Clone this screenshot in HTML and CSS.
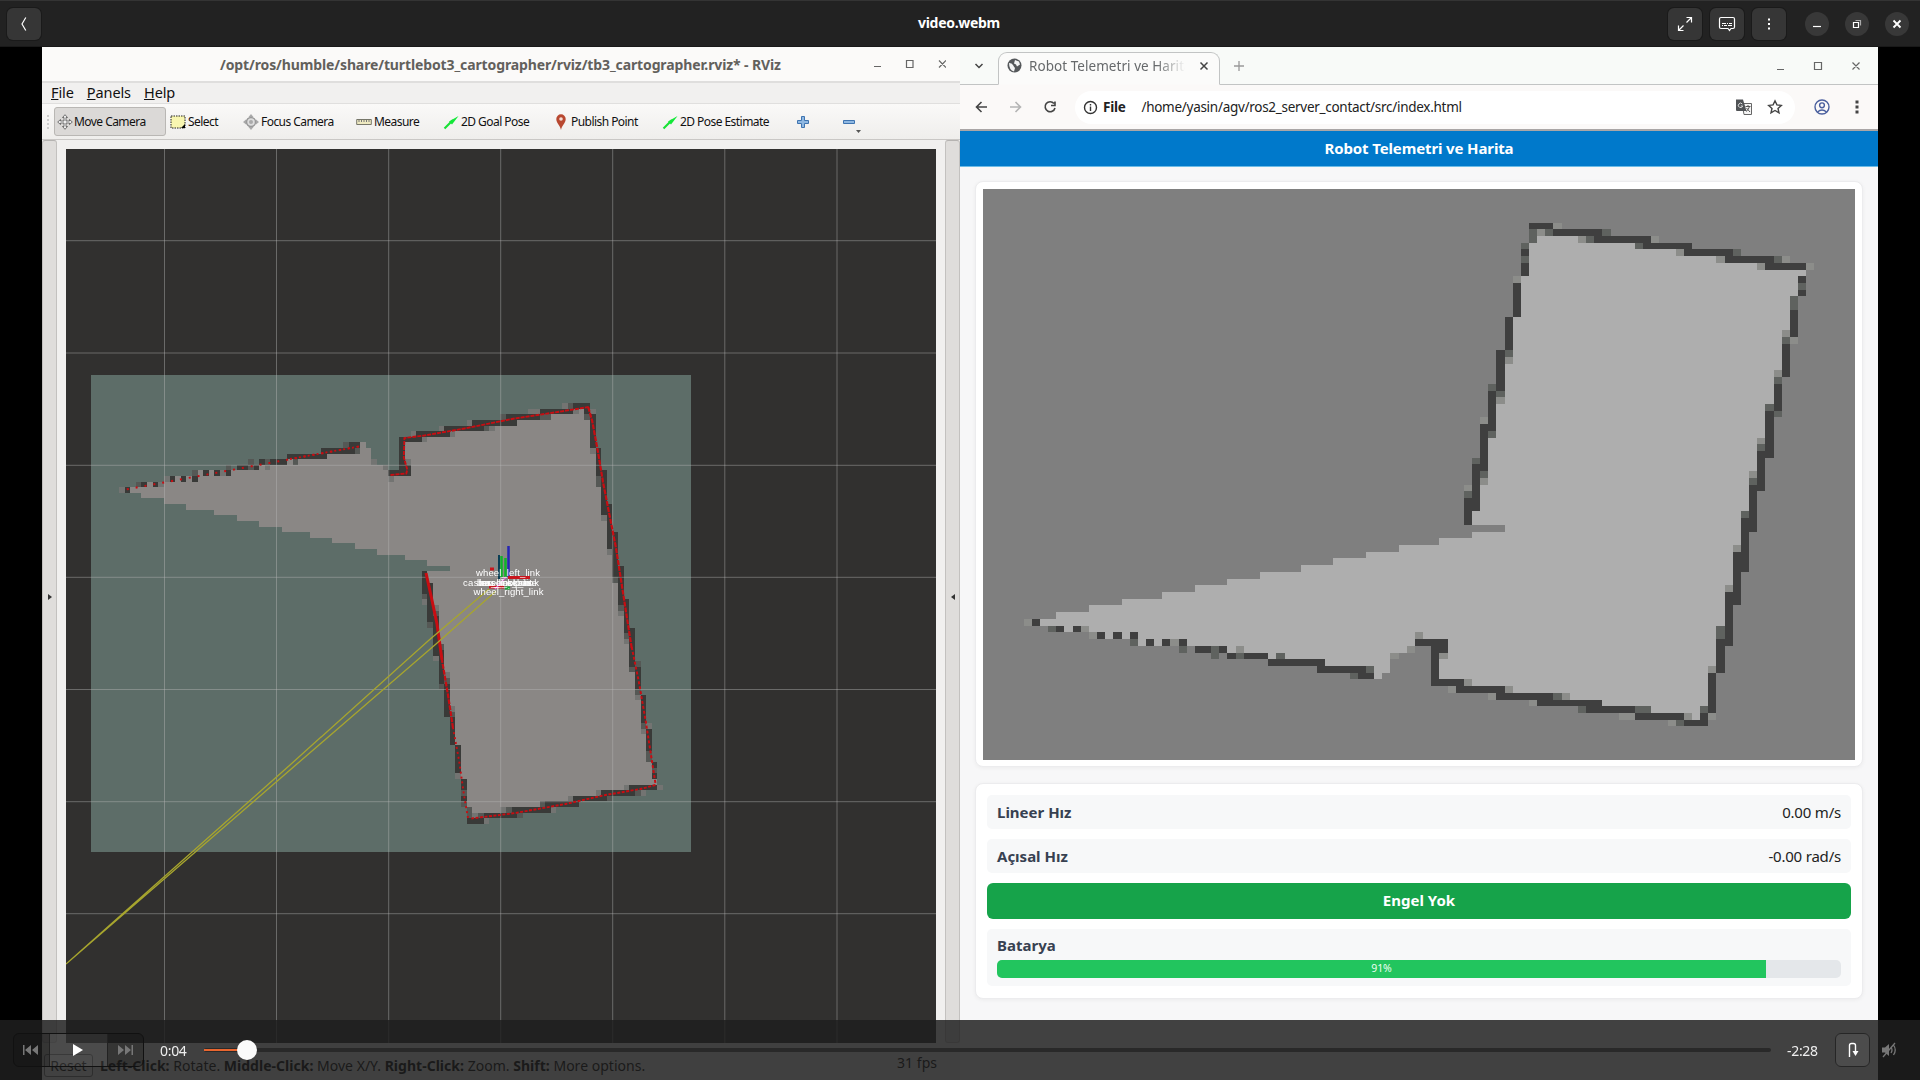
FILE: index.html
```html
<!DOCTYPE html>
<html lang="tr">
<head>
<meta charset="utf-8">
<title>video.webm</title>
<link rel="stylesheet" href="styles.css">
</head>
<body>
<header class="player-bar">
  <button class="hbtn back"><svg width="16" height="16" viewBox="0 0 16 16"><path d="M9.800 1.500 6 8l3.800 6.500"/></svg></button>
  <h1 class="player-title">video.webm</h1>
  <div class="player-actions">
    <button class="hbtn"><svg width="16" height="16" viewBox="0 0 16 16"><path d="M9.500 1.500h5v5M14 2 9.500 6.500M6.500 14.500h-5v-5M2 14l4.500-4.500"/></svg></button>
    <button class="hbtn"><svg width="18" height="16" viewBox="0 0 18 16"><path d="M3 1.500h12q1.500 0 1.500 1.500v8q0 1.500-1.500 1.500h-2l-1.500 2-1.500-2H3Q1.500 12.500 1.500 11V3Q1.500 1.500 3 1.500zM4 7.500h4M9 7.500h1M11 7.500h3M4 9.500h1M6 9.500h3M10 9.500h4"/></svg></button>
    <button class="hbtn"><svg width="16" height="16" viewBox="0 0 16 16"><path class="solid" d="M7 2.500h2v2H7zM7 7h2v2H7zM7 11.500h2v2H7z"/></svg></button>
  </div>
  <div class="win-actions">
    <button class="round"><svg width="16" height="16" viewBox="0 0 16 16"><path d="M4 10.500h8"/></svg></button>
    <button class="round"><svg width="16" height="16" viewBox="0 0 16 16"><path d="M4.500 6.500h5v5h-5z"/><path class="faint" d="M6.500 4.500h5v5"/></svg></button>
    <button class="round"><svg width="16" height="16" viewBox="0 0 16 16"><path class="bold" d="m4.500 4.500 7 7m0-7-7 7"/></svg></button>
  </div>
</header>

<main class="stage">
  <section class="rviz">
    <div class="rviz-title">
      <span class="rviz-name">/opt/ros/humble/share/turtlebot3_cartographer/rviz/tb3_cartographer.rviz* - RViz</span>
      <svg class="rviz-win" width="76" height="16" viewBox="0 0 76 16"><path d="M4 10.500h7M36.500 4.500h6.500v7h-6.500zM69 4.500l7 7m0-7-7 7"/></svg>
    </div>
    <nav class="menu"><span><u>F</u>ile</span><span><u>P</u>anels</span><span><u>H</u>elp</span></nav>
    <div class="tools">
      <i class="grip"></i>
      <div class="tool active"><svg width="16" height="16" viewBox="0 0 16 16"><path d="M8 .7 10.500 3.500H9V7h3.500V5.500L15.300 8l-2.800 2.500V9H9v3.500h1.500L8 15.300 5.500 12.500H7V9H3.500v1.500L.7 8l2.800-2.500V7H7V3.500H5.500z" fill="#eee" stroke="#555" stroke-width=".8"/></svg><span>Move Camera</span></div>
      <div class="tool"><svg width="16" height="16" viewBox="0 0 16 16"><path d="M1 2h14v12H1z" fill="#f8f6b0" stroke="#222" stroke-dasharray="1.500 1"/><path d="m15 10v4h-4z"/></svg><span>Select</span></div>
      <div class="tool"><svg width="16" height="16" viewBox="0 0 16 16"><path d="m8 0 2.500 3h-5zM8 16l2.500-3h-5zM0 8l3-2.500v5zM16 8l-3-2.500v5z" fill="#aaa"/><circle cx="8" cy="8" r="4.500" fill="#ddd" stroke="#999" stroke-width="1.500"/><circle cx="8" cy="8" r="2" fill="#aaa"/></svg><span>Focus Camera</span></div>
      <div class="tool"><svg width="16" height="16" viewBox="0 0 16 16"><path d="M.7 5.500h14.600v5H.7z" fill="#eee9c0" stroke="#77776a"/><path d="M3 6v2M5.500 6v2M8 6v2M10.500 6v2M13 6v2" stroke="#777"/></svg><span>Measure</span></div>
      <div class="tool"><svg width="16" height="16" viewBox="0 0 16 16"><path d="M1.500 14.500 10 6" stroke="#19e135" stroke-width="2.200"/><path d="m6 7.500 3 3L15.500 2z" fill="#12e838"/></svg><span>2D Goal Pose</span></div>
      <div class="tool"><svg width="16" height="16" viewBox="0 0 16 16"><path d="M8 16C7 11 3.300 9 3.300 5a4.700 4.700 0 0 1 9.400 0C12.700 9 9 11 8 16z" fill="#b84830"/><circle cx="8" cy="5" r="1.800" fill="#f3dcd5"/></svg><span>Publish Point</span></div>
      <div class="tool"><svg width="16" height="16" viewBox="0 0 16 16"><path d="M1.500 14.500 10 6" stroke="#19e135" stroke-width="2.200"/><path d="m6 7.500 3 3L15.500 2z" fill="#12e838"/></svg><span>2D Pose Estimate</span></div>
      <div class="tool"><svg width="14" height="14" viewBox="0 0 14 14"><path d="M5.500 1.500h3v4h4v3h-4v4h-3v-4h-4v-3h4z" fill="#8fb8e2" stroke="#3f74b0"/></svg></div>
      <div class="tool"><svg width="22" height="22" viewBox="0 0 22 22"><path d="M1.500 9.500h11v3h-11z" fill="#8fb8e2" stroke="#3f74b0"/><path d="M14 19h5l-2.500 3z" fill="#555"/></svg></div>
    </div>
    <div class="rviz-body">
      <div class="dock"><i class="arrow-r"></i></div>
      <div class="view">
        <canvas class="occupancy" id="costmap" width="107" height="85"></canvas>
        <svg class="overlay" width="870" height="894" viewBox="66 149 870 894">
          <path d="M164.500 149v894M276.500 149v894M388.700 149v894M500.700 149v894M612.700 149v894M724.800 149v894M837 149v894M66 240.700h870M66 353h870M66 465.300h870M66 577.300h870M66 689.500h870M66 801.700h870M66 913.700h870" stroke="#b8b8b8" stroke-opacity=".43"/>
          <g fill="none" stroke="#c80d12">
            <path d="M126.800 489.300 359 446.500" stroke-width="2" stroke-dasharray="2 7"/>
            <path d="M290 459l69-12.500" stroke-width="1.800" stroke-dasharray="2 2.500"/>
            <path d="m390.500 475 15.800-1.500 1-4-3.500-12 .6-19.500 20-2.500 40-7 50-10 40-6 34.300-5.500" stroke-width="1.900" stroke-dasharray="4 1"/>
            <path d="m588.200 407 4 14 5.800 31 5 30 13 66 15.700 100" stroke-width="2.200" stroke-dasharray="5 1"/>
            <path d="m631.700 647 7 34 7 40 10 64" stroke-width="2" stroke-dasharray="3 2"/>
            <path d="m655.400 785-15 4-35 6-40 9-50 9-44 5.500" stroke-width="1.900" stroke-dasharray="3 1.500"/>
            <path d="m468 818-4-23-5-35-6-32" stroke-width="1.900" stroke-dasharray="2 3"/>
            <path d="m453 728-5-33-6-35" stroke-width="2.200" stroke-dasharray="5 1"/>
            <path d="m442 660-5-36-5.500-26-5.500-25" stroke-width="3"/>
          </g>
          <path d="M489 589 428 641 290 765 66 964M496 591 436 644 290 770 66 964" fill="none" stroke="#a7a52e" stroke-width="1.300"/>
          <path d="M499 555v24" stroke="#0b3f55" stroke-width="2"/>
          <path d="M501.500 556v21M505.500 558v19" stroke="#10b42a" stroke-width="2.500"/>
          <path d="M508.500 546v31" stroke="#2525b4" stroke-width="2.500"/>
          <path d="M508 577.500h22M489 587h15M490 569h4" stroke="#c9161d" stroke-width="3"/>
          <path d="m495 589 11-12" stroke="#e46bd6" stroke-width="1.500"/>
          <path d="M505 588h5" stroke="#19a838" stroke-width="3"/>
          <g class="frames">
            <text x="476" y="576" textLength="64">wheel_left_link</text>
            <text x="463" y="585.500" textLength="76">caster_back_link</text>
            <text x="477" y="585.500" textLength="55">base_footprint</text>
            <text x="479" y="585.500" textLength="50">base_scan</text>
            <text x="479" y="585.500" textLength="58">imu_link_base</text>
            <text x="473.500" y="594.500" textLength="70">wheel_right_link</text>
          </g>
        </svg>
      </div>
      <div class="dock"><i class="arrow-l"></i></div>
    </div>
    <footer class="status"><button class="reset">Reset</button><p><b>Left-Click:</b> Rotate. <b>Middle-Click:</b> Move X/Y. <b>Right-Click:</b> Zoom. <b>Shift:</b> More options.</p><span class="fps">31 fps</span></footer>
  </section>

  <section class="browser">
    <div class="tabstrip">
      <svg class="chev" width="10" height="10" viewBox="0 0 10 10"><path d="m1.500 3 3.500 3.500L8.500 3"/></svg>
      <div class="tab">
        <svg width="15" height="15" viewBox="0 0 15 15"><circle cx="7.500" cy="7.500" r="7" fill="#55585b"/><path d="M2 5q3 0 4 2t2 3l-1 3.500Q2 12 2 5M8 2l4 1.500 1 3-3 2-1-2-2-1z" fill="#f3f4f4"/></svg>
        <span class="tab-name">Robot Telemetri ve Harita</span>
        <svg width="10" height="10" viewBox="0 0 10 10"><path d="m1.500 1.500 7 7m0-7-7 7" stroke="#444" stroke-width="1.500"/></svg>
      </div>
      <svg class="plus" width="12" height="12" viewBox="0 0 12 12"><path d="M6 1v10M1 6h10"/></svg>
      <svg class="bwin" width="84" height="16" viewBox="0 0 84 16"><path d="M1 11.500h7M38.500 4.500h7v7h-7zM76.500 4.500l7 7m0-7-7 7"/></svg>
    </div>
    <div class="urlbar">
      <svg width="82" height="16" viewBox="0 0 82 16" fill="none" stroke-width="1.600"><path d="M12 8H1.500M6.500 3l-5 5 5 5" stroke="#444"/><path d="M35 8h10.500M40.500 3l5 5-5 5" stroke="#b5b5b5"/><path d="M79 4.500A5 5 0 1 0 80 9M80 2.500v4h-4" stroke="#444"/></svg>
      <div class="omnibox">
        <svg width="15" height="15" viewBox="0 0 15 15" fill="none" stroke="#333" stroke-width="1.400"><circle cx="7.500" cy="7.500" r="6"/><path d="M7.500 6.500v4.500M7.500 4v1.500"/></svg>
        <b>File</b><span class="url">/home/yasin/agv/ros2_server_contact/src/index.html</span>
        <svg class="translate" width="16" height="16" viewBox="0 0 16 16"><path d="M6 4.500h9.500v11H8z" fill="#f5f5f5" stroke="#666"/><path d="M0 .5h7L10.500 12H1Q0 12 0 11z" fill="#505356"/><path d="M6.300 5A2.200 2.200 0 1 0 6.700 7H4.800" fill="none" stroke="#ddd"/><path d="M9.500 7.500h5M12 6v1.500M13.500 7.500q-1 3.500-3.500 5M10.500 9l3.500 4" fill="none" stroke="#555"/></svg>
        <svg width="16" height="16" viewBox="0 0 16 16"><path d="m8 1.800 1.900 4.100 4.400.5-3.300 3 1 4.400L8 11.500l-4 2.300 1-4.400-3.300-3 4.400-.5z" fill="none" stroke="#444" stroke-width="1.400"/></svg>
      </div>
      <svg width="16" height="16" viewBox="0 0 16 16" fill="none" stroke="#4a5f9e" stroke-width="1.400"><circle cx="8" cy="8" r="7"/><circle cx="8" cy="6.300" r="2.400"/><path d="M3.500 13q4.500-4 9 0"/></svg>
      <svg class="kebab" width="4" height="16" viewBox="0 0 4 16"><path d="M.5 1.500h3v3h-3zM.5 6.500h3v3h-3zM.5 11.500h3v3h-3z" fill="#444"/></svg>
    </div>
    <h2 class="page-head">Robot Telemetri ve Harita</h2>
    <div class="page">
      <div class="card map-card"><canvas class="map" id="map" width="107" height="85"></canvas></div>
      <div class="card stats">
        <div class="row"><b>Lineer Hız</b><span>0.00 m/s</span></div>
        <div class="row"><b>Açısal Hız</b><span>-0.00 rad/s</span></div>
        <div class="ok">Engel Yok</div>
        <div class="battery"><b>Batarya</b><div class="bar"><div class="fill" style="width:91.1%">91%</div></div></div>
      </div>
    </div>
  </section>
</main>

<div class="controls">
  <div class="transport">
    <button><svg width="16" height="12" viewBox="0 0 16 12"><path d="M0 1h1.500v10H0zM8 1v10L2 6zM15 1v10L9 6z"/></svg></button>
    <button class="play"><svg width="12" height="12" viewBox="0 0 12 12"><path d="M1 0v12l10-6z"/></svg></button>
    <button><svg width="16" height="12" viewBox="0 0 16 12"><path d="M1 1v10l6-5zM8 1v10l6-5zM14.500 1H16v10h-1.500z"/></svg></button>
  </div>
  <span class="time now">0:04</span>
  <div class="track"><div class="played" style="width:2.75%"></div><i class="thumb"></i></div>
  <span class="time left">-2:28</span>
  <button class="loop"><svg width="16" height="16" viewBox="0 0 16 16"><path d="M4.500 15V3.500q0-2 2-2h2q2 0 2 2V10" fill="none" stroke="#fff" stroke-width="1.400"/><path d="M7.500 9h6l-3 5z" fill="#fff"/></svg></button>
  <svg class="mute" width="16" height="16" viewBox="0 0 16 16"><path d="M1 5.500h3L8 2v12l-4-3.500H1z" fill="#777"/><path d="M10 5q2 3 0 6M12.500 3q3.500 5 0 10M2 15 14 1" fill="none" stroke="#777" stroke-width="1.300"/></svg>
</div>
<script src="map.js"></script>
</body>
</html>
```
FILE: styles.css
```css
* { box-sizing: border-box; }
body { margin: 0; width: 1920px; height: 1080px; overflow: hidden; display: flex; flex-direction: column; position: relative; background: #000; font-family: "Noto Sans", "Open Sans", sans-serif; font-size: 14px; }
button { font: inherit; padding: 0; margin: 0; border: 0; display: flex; align-items: center; justify-content: center; }
svg { flex: none; display: block; }

.player-bar { height: 47px; background: #222; border-top: 1px solid #343434; border-bottom: 1px solid #191919; display: grid; grid-template-columns: 1fr auto 1fr; align-items: center; padding: 0 9px 0 7px; flex: none; }
.player-title { margin: 0 0 2px 0; font-size: 14px; font-weight: 700; color: #fff; grid-column: 2; letter-spacing: -.3px; }
.back { justify-self: start; }
.player-bar svg path { fill: none; stroke: #fff; stroke-width: 1.200; }
.player-bar svg .solid { fill: #fff; stroke: none; }
.player-bar svg .faint { stroke: #aaa; }
.player-bar svg .bold { stroke-width: 1.800; }
.hbtn { width: 34px; height: 32px; background: #363636; border-radius: 6px; box-shadow: 0 0 0 1px #1a1a1a; }
.player-actions { display: flex; gap: 8px; justify-self: end; margin-right: 125px; grid-column: 3; grid-row: 1; }
.win-actions { display: flex; gap: 16px; grid-column: 3; grid-row: 1; justify-self: end; margin-right: 2px; }
.round { width: 24px; height: 24px; border-radius: 50%; background: #383838; }

.stage { flex: 1; display: flex; padding: 0 42px; min-height: 0; }
.rviz { width: 918px; display: flex; flex-direction: column; background: #f1f0ef; color: #222; }
.rviz-title { height: 36px; background: #fbfaf9; border-bottom: 2px solid #dfdedd; display: flex; align-items: center; padding: 0 14px 0 178px; justify-content: space-between; }
.rviz-name { color: #62605c; font-weight: 700; font-size: 14px; letter-spacing: -.12px; white-space: nowrap; }
.rviz-win path, .bwin path { fill: none; stroke: #666; stroke-width: 1.200; }
.menu { height: 21px; display: flex; gap: 13px; padding: 0 0 3px 9px; align-items: center; font-size: 14.500px; line-height: 18px; letter-spacing: -.1px; color: #111; border-bottom: 1px solid #e0dfde; }
.tools { height: 36px; display: grid; grid-template-columns: 12px 113px 73px 113px 87px 110px 109px 134px 46px 30px; align-items: center; background: linear-gradient(#faf9f8, #efeeec); border-bottom: 1px solid #c9c7c5; font-size: 12px; letter-spacing: -.55px; color: #111; }
.grip { width: 4px; height: 16px; margin-left: 4px; background: radial-gradient(#ccc 1px, transparent 1px) 0 0/4px 4px; }
.tool { display: flex; align-items: center; gap: 2px; padding-left: 3px; height: 29px; white-space: nowrap; }
.tool.active { width: 112px; background: #dbd9d7; border: 1px solid #b9b7b4; border-radius: 3px; padding-left: 2px; gap: 1px; }
.rviz-body { flex: none; height: 903px; display: flex; justify-content: space-between; }
.dock { width: 15px; border: 1px solid #c3c1bf; border-top-color: #b5b3b1; background: #dfdddb; border-radius: 3px; display: flex; align-items: center; justify-content: center; }
.arrow-r, .arrow-l { border: 3px solid transparent; margin-top: 10px; }
.arrow-r { border-left: 4px solid #333; border-right: 0; }
.arrow-l { border-right: 4px solid #333; border-left: 0; }
.view { position: relative; width: 870px; height: 894px; margin-top: 9px; background: #31302f; overflow: hidden; }
.occupancy { position: absolute; left: 25.300px; top: 226.300px; width: 599.700px; height: 476.500px; image-rendering: pixelated; }
.overlay { position: absolute; left: 0; top: 0; }
.frames { font: 9.500px "Liberation Sans", sans-serif; fill: #fff; }
.status { flex: 1; display: flex; align-items: center; padding: 8px 23px 0 2px; font-size: 14px; letter-spacing: .02px; color: #000; }
.status p { margin: 0 auto 0 7px; }
.reset { width: 49px; height: 23px; border: 1px solid #777; border-radius: 3px; background: #f5f5f5; color: #000; }
.fps { margin-top: -6px; }

.browser { width: 918px; display: flex; flex-direction: column; background: #f7f7f8; }
.tabstrip { height: 38px; display: flex; align-items: center; background: #f8faf8; border-bottom: 1px solid #c2c4c4; padding: 0 18px 0 14px; }
.chev path { fill: none; stroke: #444; stroke-width: 1.500; }
.tab { width: 222px; height: 33px; margin: 5px 0 0 14px; align-self: flex-start; border: 1px solid #c2c4c4; border-bottom-color: #fbfaf9; border-radius: 9px 9px 0 0; background: #fbfbfa; display: flex; align-items: center; padding: 0 10px 6px 8px; gap: 7px; }
.tab-name { flex: 1; white-space: nowrap; overflow: hidden; font-size: 13.500px; letter-spacing: .05px; color: #66696b; -webkit-mask-image: linear-gradient(90deg, #000 78%, transparent 96%); mask-image: linear-gradient(90deg, #000 78%, transparent 96%); }
.plus { margin-left: 13px; }
.plus path { stroke: #999; stroke-width: 1.300; }
.bwin { margin-left: auto; }
.urlbar { height: 46px; display: flex; align-items: center; background: #fbf9f8; border-bottom: 2px solid #aaa6a6; padding: 0 19px 0 15px; }
.omnibox { flex: 1; height: 33px; margin: 0 19px 0 18px; background: #fff; border-radius: 17px; display: flex; align-items: center; padding: 0 12px 0 8px; font-size: 13.500px; letter-spacing: -.28px; color: #222; }
.omnibox b { margin: 0 16px 0 5px; }
.translate { margin: 0 15px 0 auto; }
.kebab { margin-left: 25px; }
.page-head { margin: 0; height: 36px; background: #0079cb; border-bottom: 1px solid #6bbbe6; color: #fff; font-size: 15px; line-height: 34px; text-align: center; letter-spacing: -.13px; }
.page { padding: 14px 15px; display: flex; flex-direction: column; gap: 16px; }
.card { background: #fff; border: 1px solid #ececee; border-radius: 8px; box-shadow: 0 1px 4px rgba(0,0,0,.05); }
.map-card { padding: 7px 7px 8px; height: 586px; }
.map { display: block; width: 872px; height: 570.500px; image-rendering: pixelated; }
.stats { height: 216px; padding: 11px; display: flex; flex-direction: column; gap: 10px; font-size: 15px; letter-spacing: -.2px; color: #222; }
.stats b { color: #374151; letter-spacing: 0; }
.row { height: 34px; background: #f7f8f9; border-radius: 5px; display: flex; justify-content: space-between; align-items: center; padding: 0 10px 1px; }
.ok { height: 36px; background: #16a34a; border-radius: 6px; color: #fff; font-weight: 700; text-align: center; line-height: 35px; letter-spacing: 0; }
.battery { height: 57px; background: #f7f8f9; border-radius: 5px; padding: 6px 10px; }
.battery b { display: block; line-height: 21px; height: 25px; }
.bar { height: 18px; border-radius: 5px; background: #e4e7ea; overflow: hidden; }
.fill { height: 18px; line-height: 17px; background: #22c55e; color: #ecfff2; font-size: 10.500px; text-align: center; }

.controls { position: absolute; left: 0; right: 0; bottom: 0; height: 60px; background: rgba(31,31,31,.845); display: flex; align-items: center; padding: 0 23px 0 13px; }
.transport { display: flex; width: 131px; height: 34px; border: 1px solid #111; border-radius: 6px; overflow: hidden; }
.transport button { width: 35px; padding-right: 2px; background: rgba(20,20,20,.25); }
.transport .play { flex: 1; background: rgba(255,255,255,.06); border: solid #222; border-width: 0 1px; }
.transport svg { fill: #777; }
.transport .play svg { fill: #fff; }
.time { color: #eee; font-size: 14px; letter-spacing: -.3px; }
.now { width: 44px; margin-left: 16px; }
.track { flex: 1; height: 4px; background: #292929; border-radius: 2px; position: relative; }
.played { height: 2px; margin-top: 1px; background: #e9662f; }
.thumb { position: absolute; left: 33px; top: -8px; width: 20px; height: 20px; border-radius: 50%; background: #fafafa; }
.left { width: 48px; margin-left: 16px; }
.loop { width: 35px; height: 34px; border: 1px solid #262626; border-radius: 6px; background: #4c4c4c; }
.mute { margin-left: 11px; }
```
FILE: map.js
```js
// Occupancy grid, 107 x 85 cells. Each entry is "row:start-end,..." (end exclusive).
const FREE = `6:68-69 7:68-74 8:67-81 9:67-86 10:67-91 11:67-96 12:67-101 13:66-100 14:66-100 15:66-100 16:66-99 17:66-99 18:66-99
19:65-99 20:65-99 21:65-99 22:65-98 23:65-98 24:65-98 25:64-98 26:64-98 27:64-98 28:64-97 29:64-97 30:64-97 31:63-97 32:63-97
33:63-96 34:63-96 35:63-96 36:63-96 37:62-96 38:62-95 39:62-95 40:62-95 41:62-95 42:62-95 43:61-94 44:61-94 45:61-94 46:61-94
47:61-94 48:60-93 49:60-93 50:64-93 51:60-93 52:56-93 53:51-93 54:47-92 55:43-92 56:39-92 57:34-92 58:30-92 59:26-92 60:22-91
61:17-91 62:13-91 63:9-91 64:7-91 65:10-11,13-90 66:15-16,17-18,19-90 67:19-20,21-22,23-24,25-53,57-90 68:30-52,57-90
69:35-51,56-90 70:42-50,56-90 71:48-50,56-89 72:48-49,56-89 73:59-89 74:64-89 75:70-89 76:76-89 77:82-88 78:87-88`;
const WALL = `5:67-70 6:70-76 7:75-82 8:81-87 9:66-67,86-92 10:91-97 11:66-67,96-101 12:66-67 13:100-101 14:65-66 15:65-66,100-101
16:65-66 17:65-66 18:65-66,99-100 19:64-65,99-100 20:64-65,99-100 21:64-65,99-100 22:64-65 23:64-65,98-99 24:63-64,98-99
25:63-64,98-99 26:63-64,98-99 27:63-64,98-99 28:63-64,97-98 29:63-64,97-98 30:62-63,97-98 31:62-63,97-98 32:62-63,97-98
33:62-63,96-97 34:62-63,96-97 35:61-63,96-97 36:61-62,96-97 37:61-62,96-97 38:61-62,96-97 39:61-62,95-97 40:61-62,95-96
41:60-62,95-96 42:60-61,95-96 43:60-61,95-96 44:60-61,94-96 45:60-61,94-95 46:59-61,94-95 47:59-61,94-95 48:59-60,94-95
49:59-60,93-95 50:93-95 51:93-94 52:93-94 53:93-94 54:92-94 55:92-94 56:92-94 57:92-93 58:92-93 59:92-93 60:91-93 61:91-93
62:91-92 63:91-92 64:6-7,91-92 65:9-10,11-12,91-92 66:14-15,16-17,18-19,91-92 67:20-21,22-23,24-25,53-57,90-92
68:26-28,29-30,56-57,55-56,90-91 69:30-31,32-35,55-56,90-91 70:35-42,55-56,90-91 71:41-47,55-56,90-91 72:46-48,55-56,89-90
73:55-59,89-90 74:58-64,89-90 75:63-70,89-90 76:68-76,89-90 77:74-80,89-90 78:80-86,88-89 79:86-89`;
const MID = `6:67-68,69-70,76-77 7:67-68,74-75 8:66-67,80-81 9:92-93 10:66-67,97-98 14:100-101 16:99-100 17:99-100 22:98-99
24:64-65 28:97-98 29:62-63 30:63-64 32:96-97 33:97-98 36:62-63 38:95-96 40:60-61 42:61-62 43:94-95 45:59-60 48:93-94
65:8-9,90-91 66:90-91 67:18-19 68:24-25,28-29 69:28-29,31-32,36-37 71:47-48 72:45-46 75:70-71 77:73-74,80-82,88-89 79:85-86`;
const SOFT = `5:70-71 6:68-69 7:73-74,82-83 9:85-86 10:90-91,98-99 11:95-96,101-102 13:65-66 21:98-99 22:99-100 25:64-65 27:97-98
31:63-64 34:61-62 37:95-96 42:94-95 43:61-62 44:59-60 53:92-93 59:91-92 64:5-6 65:12-13 66:13-14,53-54 67:23-24 68:31-32,52-53
69:56-57,50-51 71:89-90 73:59-60 74:57-58,64-65 75:62-63,71-72 76:67-68 78:78-80,86-87,89-90 79:84-85`;

function cells(ctx, table, color, flip) {
  ctx.fillStyle = color;
  for (const line of table.trim().split(/\s+/)) {
    const [r, runs] = line.split(":");
    const y = flip ? 84 - r : +r;
    for (const run of runs.split(",")) {
      const [a, b] = run.split("-").map(Number);
      ctx.fillRect(a, y, b - a, 1);
    }
  }
}
function draw(id, c, flip) {
  const ctx = document.getElementById(id).getContext("2d");
  ctx.fillStyle = c.unknown;
  ctx.fillRect(0, 0, 107, 85);
  cells(ctx, FREE, c.free, flip);
  cells(ctx, WALL, c.wall, flip);
  cells(ctx, MID, c.mid, flip);
  cells(ctx, SOFT, c.soft, flip);
}
draw("map", { unknown: "#7f7f7f", free: "#aeaeae", wall: "#3f3f3f", mid: "#5f625f", soft: "#8c8d8a" }, false);
draw("costmap", { unknown: "#5d6d68", free: "#8a8785", wall: "#393a38", mid: "#555855", soft: "#737472" }, true);
```
